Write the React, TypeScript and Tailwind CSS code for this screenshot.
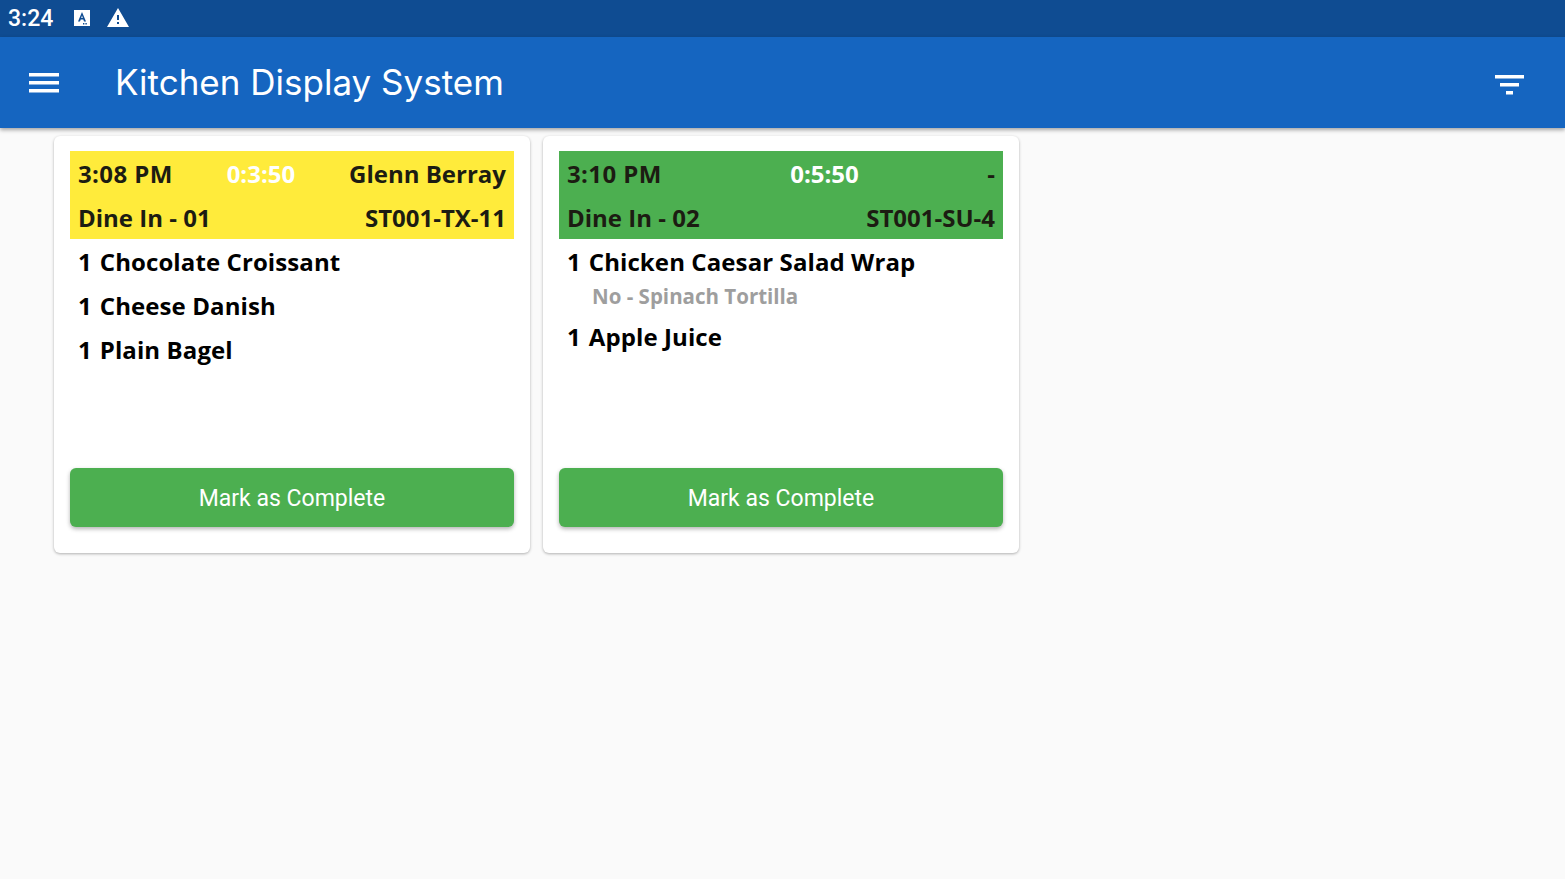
// Order data shown on the kitchen display
type OrderItem = { qty: number; name: string; note?: string };
type Order = {
	time: string;
	elapsed: string;
	customer: string;
	table: string;
	code: string;
	headerClass: string;
	items: OrderItem[];
};

const orders: Order[] = [
	{
		time: "3:08 PM",
		elapsed: "0:3:50",
		customer: "Glenn Berray",
		table: "Dine In - 01",
		code: "ST001-TX-11",
		headerClass: "bg-[#ffeb3b]",
		items: [
			{ qty: 1, name: "Chocolate Croissant" },
			{ qty: 1, name: "Cheese Danish" },
			{ qty: 1, name: "Plain Bagel" },
		],
	},
	{
		time: "3:10 PM",
		elapsed: "0:5:50",
		customer: "-",
		table: "Dine In - 02",
		code: "ST001-SU-4",
		headerClass: "bg-[#4caf50]",
		items: [
			{ qty: 1, name: "Chicken Caesar Salad Wrap", note: "No - Spinach Tortilla" },
			{ qty: 1, name: "Apple Juice" },
		],
	},
];

function OrderCard({ order }: { order: Order }) {
	return (
		<div className="flex h-[417px] w-[476px] flex-col rounded-[6px] bg-white px-4 pt-[15px] pb-[26px] shadow-[0_1px_3px_rgba(0,0,0,0.3)]">
			<div className={`${order.headerClass} px-2 text-[#1c1c12]`}>
				<div className="flex h-11 items-center justify-between pt-[2px]">
					<span className="tracking-[0.4px]">{order.time}</span>
					<span className="text-white">{order.elapsed}</span>
					<span>{order.customer}</span>
				</div>
				<div className="flex h-11 items-center justify-between pt-[2px]">
					<span>{order.table}</span>
					<span>{order.code}</span>
				</div>
			</div>
			<div className="flex-1 px-2 text-black">
				{order.items.map((item) => (
					<div key={item.name}>
						<div className="flex h-11 items-center gap-[8px] pt-[2px]">
							<span>{item.qty}</span>
							<span className="tracking-[0.1px]">{item.name}</span>
						</div>
						{item.note && (
							<div className="h-[31px] pl-[25px] text-[20.5px] leading-[26px] text-[#9e9e9e]">
								{item.note}
							</div>
						)}
					</div>
				))}
			</div>
			<button
				type="button"
				className="h-[59px] w-full rounded-[6px] bg-[#4caf50] pt-[3px] font-['Roboto',sans-serif] text-[23px] font-normal text-white shadow-[0_2px_4px_rgba(0,0,0,0.3)]"
			>
				Mark as Complete
			</button>
		</div>
	);
}

export default function App() {
	return (
		<div className="flex min-h-[879px] flex-col bg-[#fafafa]">
			{/* Android status bar */}
			<div className="flex h-[37px] items-center bg-[#0f4c92] pl-2 text-white">
				<span className="pt-[2px] font-['Roboto',sans-serif] text-[23px] font-medium">3:24</span>
				<svg className="ml-[20px] mb-[2px]" width="18" height="18" viewBox="0 0 18 18">
					<path d="M1 1h16v16H1z" fill="#fff" />
					<path d="M9 3 5 12.5h2l.7-1.9h2.6l.7 1.9h2L9 3zm-.8 6L9 6.6 9.8 9H8.2z" fill="#0f4c92" />
					<path d="M10 14h1.4v1.6H10zM12.4 14h1.4v1.6h-1.4z" fill="#0f4c92" />
				</svg>
				<svg className="ml-[14px] mb-[3px]" width="26" height="24" viewBox="0 0 24 24">
					<path d="M1 22h22L12 3 1 22zm12-3h-2v-2h2v2zm0-4h-2v-5h2v5z" fill="#fff" />
				</svg>
			</div>

			{/* App bar */}
			<div className="relative z-10 flex h-[91px] items-center bg-[#1565c0] text-white shadow-[0_2px_4px_rgba(0,0,0,0.35)]">
				<svg className="ml-[29px]" width="30" height="20" viewBox="0 0 30 20">
					<path d="M0 0h30v3.5H0zM0 8h30v3.5H0zM0 16h30v3.5H0z" fill="#fff" />
				</svg>
				<h1 className="ml-[56px] font-['Inter',sans-serif] text-[35px] font-normal">
					Kitchen Display System
				</h1>
				<svg className="ml-auto mr-[41px] mt-[5px]" width="29" height="20" viewBox="0 0 29 20">
					<path d="M0 0h29v3.5H0zM5 8h19v3.5H5zM11 16h7v3.5h-7z" fill="#fff" />
				</svg>
			</div>

			{/* Order cards */}
			<div className="flex gap-[13px] pt-2 pl-[54px] font-['Open_Sans',sans-serif] text-[24px] leading-[44px] font-bold">
				{orders.map((order) => (
					<OrderCard key={order.table} order={order} />
				))}
			</div>
		</div>
	);
}
